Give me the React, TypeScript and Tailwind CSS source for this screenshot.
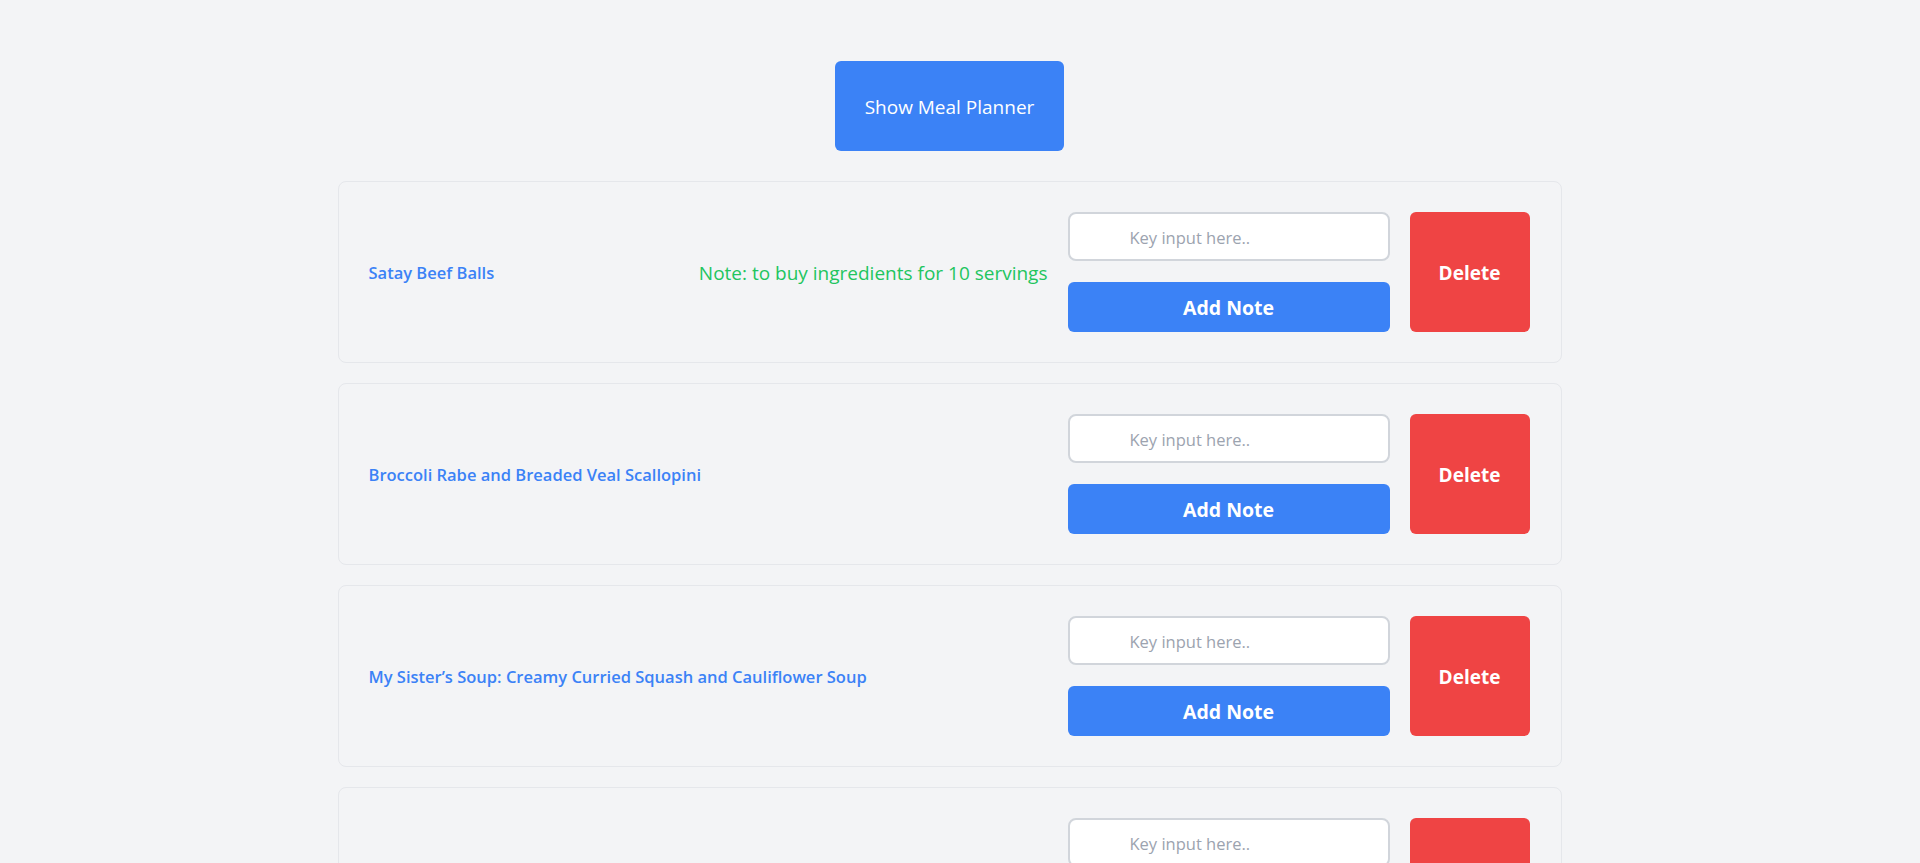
import { useState } from 'react';

type Recipe = {
  id: number;
  title: string;
  note?: string;
};

const recipes: Recipe[] = [
  { id: 1, title: 'Satay Beef Balls', note: 'Note: to buy ingredients for 10 servings' },
  { id: 2, title: 'Broccoli Rabe and Breaded Veal Scallopini' },
  { id: 3, title: 'My Sister\u2019s Soup: Creamy Curried Squash and Cauliflower Soup' },
  { id: 4, title: 'Slow Cooker Chicken Tikka Masala' },
];

function RecipeCard({ recipe }: { recipe: Recipe }) {
  const [value, setValue] = useState('');

  return (
    <div className="flex items-center gap-[20px] rounded-lg border border-[#e5e7eb] bg-[#f3f4f6] py-[30px] pl-[30px] pr-[31px]">
      <a href="#" className="flex-1 pt-[3px] text-[16.5px] font-semibold text-[#3b82f6]">
        {recipe.title}
      </a>
      {recipe.note && <p className="pt-[3px] text-[19px] text-[#22c55e]">{recipe.note}</p>}
      <div className="flex w-[322px] flex-col gap-[21px]">
        <input
          type="text"
          value={value}
          onChange={(e) => setValue(e.target.value)}
          placeholder="Key input here.."
          className="h-[49px] w-full rounded-lg border-2 border-[#d1d5db] bg-white pl-[60px] pt-[2px] text-[16.5px] text-gray-800 placeholder:text-[#9ca3af] outline-none"
        />
        <button className="h-[50px] w-full rounded-md bg-[#3b82f6] pt-[2px] text-[19.5px] font-bold text-white">
          Add Note
        </button>
      </div>
      <button className="h-[120px] w-[120px] rounded-md bg-[#ef4444] pt-[3px] text-[19px] font-bold text-white">
        Delete
      </button>
    </div>
  );
}

export default function App() {
  return (
    <div className="min-h-screen bg-[#f3f4f6] pr-[21px] pt-[61px] pb-10 font-['Open_Sans',sans-serif]">
      <div className="flex justify-center">
        <button className="h-[90px] w-[229px] rounded-md bg-[#3b82f6] pt-[2px] text-[19px] text-white">
          Show Meal Planner
        </button>
      </div>
      <div className="mx-auto mt-[30px] flex w-[1224px] flex-col gap-[20px]">
        {recipes.map((recipe) => (
          <RecipeCard key={recipe.id} recipe={recipe} />
        ))}
      </div>
    </div>
  );
}
